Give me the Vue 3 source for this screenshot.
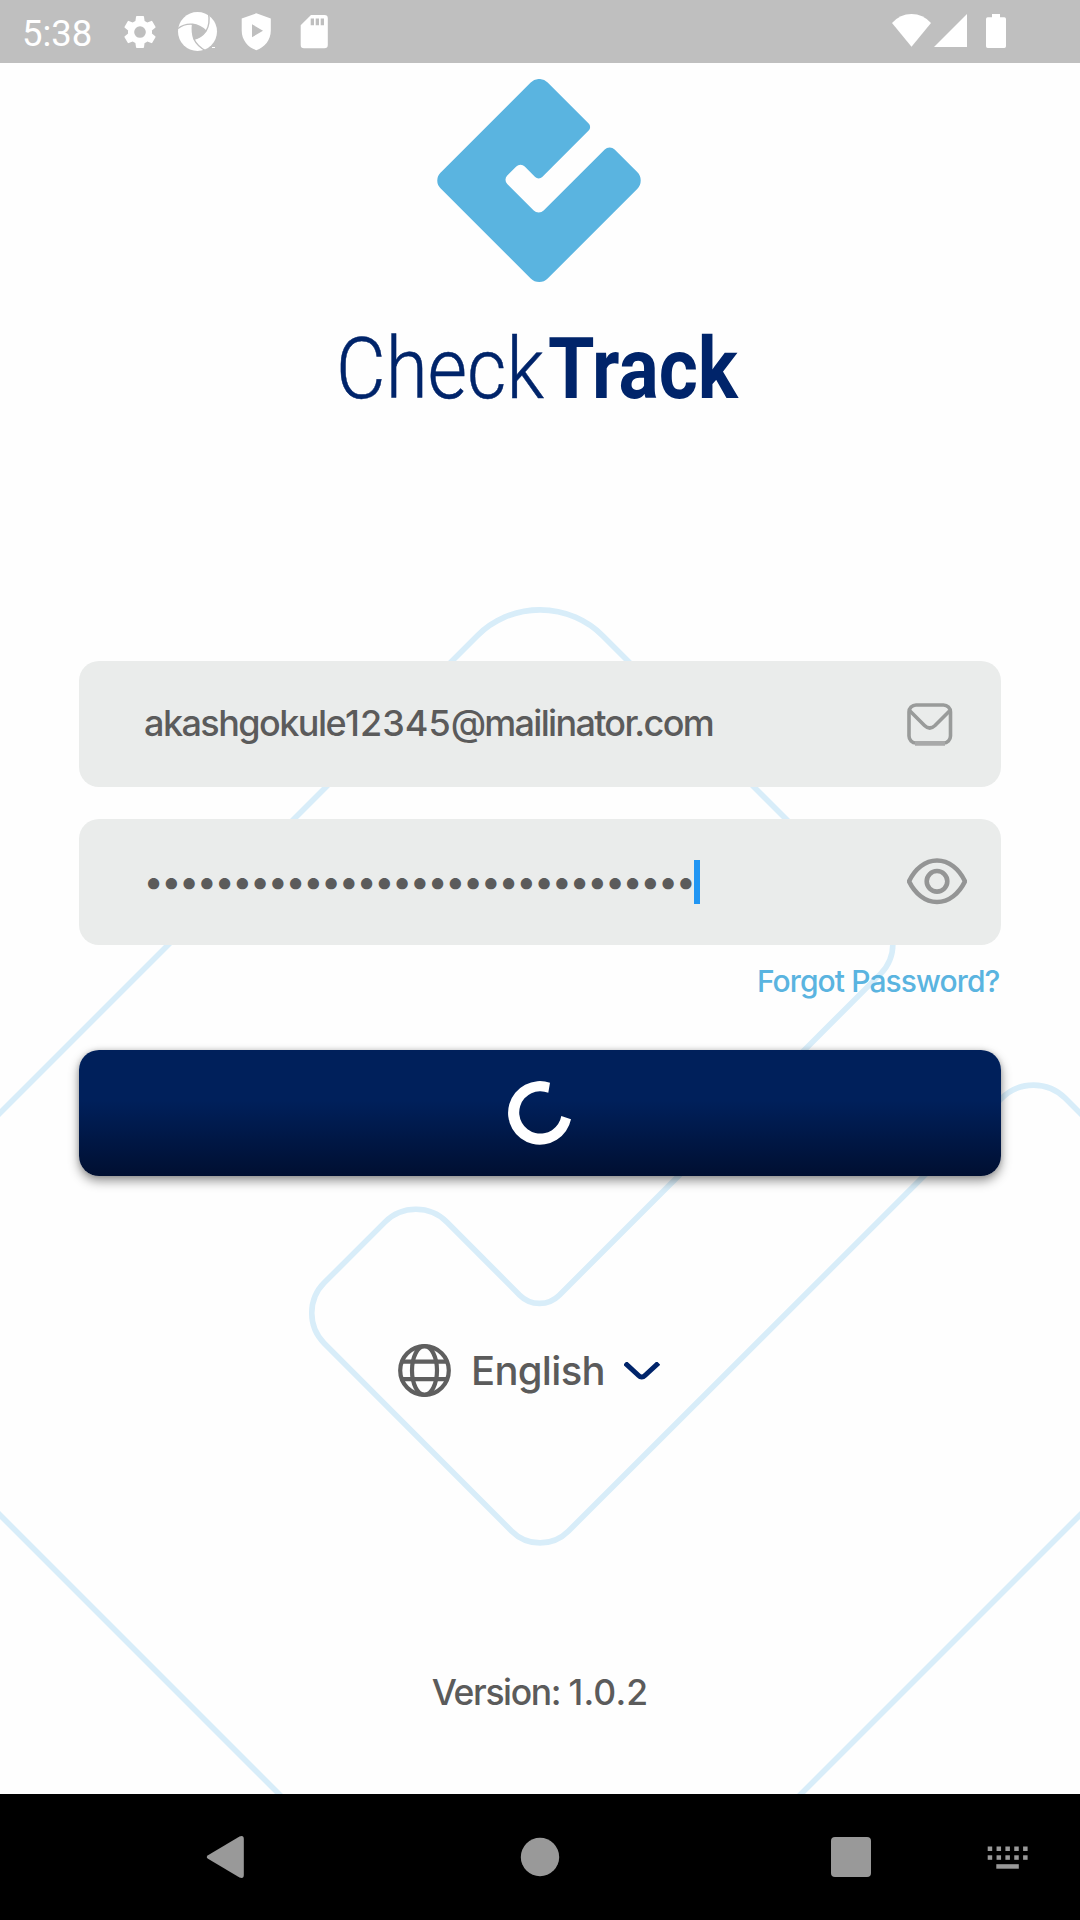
<script setup>
// Builds a path whose right-angled corners are rounded: each point is [x, y, radius].
function rounded(points, closed = true) {
  const n = points.length
  const toward = (a, b, d) => {
    const len = Math.hypot(b[0] - a[0], b[1] - a[1])
    return [a[0] + ((b[0] - a[0]) * d) / len, a[1] + ((b[1] - a[1]) * d) / len]
  }
  let d = ''
  points.forEach((p, i) => {
    if (!closed && (i === 0 || i === n - 1)) {
      d += `${i ? 'L' : 'M'}${p[0]} ${p[1]}`
      return
    }
    const prev = points[(i + n - 1) % n]
    const next = points[(i + 1) % n]
    const s = toward(p, prev, p[2])
    const e = toward(p, next, p[2])
    const cross = (p[0] - prev[0]) * (next[1] - p[1]) - (p[1] - prev[1]) * (next[0] - p[0])
    d += `${d ? 'L' : 'M'}${s[0].toFixed(2)} ${s[1].toFixed(2)}A${p[2]} ${p[2]} 0 0 ${cross > 0 ? 1 : 0} ${e[0].toFixed(2)} ${e[1].toFixed(2)}`
  })
  return closed ? d + 'Z' : d
}

const mark = rounded([
  [539.2, 74, 12], [592.2, 127, 5], [538.7, 180.5, 5], [520.5, 162.3, 6], [503, 179.8, 6],
  [538.7, 215.5, 7], [609.7, 144.5, 7], [645.7, 180.5, 12], [539.2, 287, 12], [432.7, 180.5, 11],
])

const outlineTop = rounded([
  [-20, 1133], [540, 573, 89], [910.7, 943.7, 43], [539.5, 1315, 28], [416, 1191, 44],
  [294, 1313, 43], [540, 1559.5, 40], [1033.5, 1066.5, 45], [1100, 1133],
], false)

const masked = '•'.repeat(31)
const keys = [0, 1, 2, 3, 4]
</script>

<template>
  <div class="screen">
    <header class="status">
      <span class="clock">5:38</span>
      <svg class="left-icons" width="240" height="63" viewBox="95 0 240 63">
        <g transform="translate(120 12) scale(1.667)" fill="#fff">
          <path d="M19.14 12.94c.04-.3.06-.61.06-.94 0-.32-.02-.64-.07-.94l2.03-1.58a.49.49 0 0 0 .12-.61l-1.92-3.32a.49.49 0 0 0-.59-.22l-2.39.96a7 7 0 0 0-1.62-.94l-.36-2.54a.48.48 0 0 0-.48-.41h-3.84a.48.48 0 0 0-.47.41l-.36 2.54c-.59.24-1.13.57-1.62.94l-2.39-.96a.48.48 0 0 0-.59.22L2.74 8.87a.47.47 0 0 0 .12.61l2.03 1.58c-.05.3-.09.63-.09.94s.02.64.07.94l-2.03 1.58a.49.49 0 0 0-.12.61l1.92 3.32c.12.22.37.29.59.22l2.39-.96c.5.38 1.03.7 1.62.94l.36 2.54c.05.24.24.41.48.41h3.84c.24 0 .44-.17.47-.41l.36-2.54a7 7 0 0 0 1.62-.94l2.39.96c.22.08.47 0 .59-.22l1.92-3.32a.47.47 0 0 0-.12-.61zM12 15.5a3.5 3.5 0 1 1 0-7 3.5 3.5 0 0 1 0 7z" />
        </g>
        <circle cx="197.5" cy="31.5" r="19.5" fill="#fff" />
        <g fill="none" stroke="#bfbfbf" stroke-width="1.4">
          <path d="M178 28.5Q184 23.5 192.6 24.2Q200 25 206 31" />
          <path d="M208.5 13Q210.5 24 206 31.2Q201 38 194 39.3" />
          <path d="M206 51Q197.5 46.5 194 39.3Q191.5 32 192.6 24.2" />
        </g>
        <path d="M192.6 24.2Q200 25 206 31.2Q201 38 194 39.3Q191.5 32 192.6 24.2Z" fill="#bfbfbf" />
        <path d="M212 47.5h3" stroke="#fff" stroke-width="1" />
        <path d="M256.3 13.3 270.8 18.5V30.5C270.8 40 264.5 47.5 256.3 50.2C248 47.5 241.7 40 241.7 30.5V18.5ZM252 24.2V37.3L263 30.7Z" fill="#fff" fill-rule="evenodd" />
        <path d="M311 15h13.5a3.3 3.3 0 0 1 3.3 3.3V45a3.3 3.3 0 0 1-3.3 3.3H304a3.3 3.3 0 0 1-3.3-3.3V25.3Z" fill="#fff" />
        <path d="M310.7 18.5h3.3v6.7h-3.3zM315.7 18.5h3.3v6.7h-3.3zM320.7 18.5h3.3v6.7h-3.3z" fill="#bfbfbf" />
      </svg>
      <svg class="right-icons" width="120" height="63" viewBox="888 0 120 63">
        <g fill="#fff">
          <path d="M892 23Q900 14 911.5 14T931 23L911.5 46.7Z" />
          <path d="M967 14V47H934Z" />
          <path d="M992 14h8v3.3h4.3a1.7 1.7 0 0 1 1.7 1.7v27.3a1.7 1.7 0 0 1-1.7 1.7h-16.6a1.7 1.7 0 0 1-1.7-1.7V19a1.7 1.7 0 0 1 1.7-1.7h4.3z" />
        </g>
      </svg>
    </header>

    <main class="page">
      <svg class="backdrop" width="1080" height="1731" viewBox="0 63 1080 1731">
        <g fill="none" stroke="#d8edf9" stroke-width="5.6">
          <path :d="outlineTop" />
          <path d="M-20 1495 300 1815M1100 1495 780 1815" />
        </g>
      </svg>

      <svg class="logo" width="480" height="360" viewBox="300 63 480 360">
        <svg x="339" y="79" width="402" height="240" viewBox="339 79 402 240">
          <path :d="mark" fill="#5ab4e0" />
        </svg>
        <g class="wordmark">
          <text class="light" x="336" y="398" textLength="208" lengthAdjust="spacingAndGlyphs">Check</text>
          <text class="bold" x="548" y="398" textLength="190" lengthAdjust="spacingAndGlyphs">Track</text>
        </g>
      </svg>

      <form class="form" @submit.prevent>
        <label class="field">
          <span class="value email"><span class="user">akashgokule</span><span class="digits">12345</span>@mailinator.com</span>
          <svg class="mail" width="46" height="44" viewBox="0 0 46 44" fill="none" stroke="#999b9a" stroke-width="3.6">
            <rect x="2" y="2" width="41.5" height="38" rx="7" />
            <path d="M3 8 17.5 22.5Q22.7 27.5 28 22.5L42.5 8" />
            <path d="M8 40.5H38" stroke="#a8a9a9" stroke-width="4.5" />
          </svg>
        </label>
        <label class="field">
          <span class="value dots">{{ masked }}</span>
          <i class="caret"></i>
          <svg class="eye" width="60" height="48" viewBox="0 0 60 48" fill="none" stroke="#949595" stroke-width="4.6">
            <path d="M2 23.3C8 11 18 2.5 30 2.5S52 11 58 23.3C52 35.5 42 44 30 44S8 35.5 2 23.3Z" />
            <circle cx="30" cy="23.3" r="10.3" />
          </svg>
        </label>
        <a class="forgot">Forgot Password?</a>
        <button class="submit" type="submit">
          <svg width="64" height="64" viewBox="508 1081 64 64">
            <path d="M550 1082.7A31.8 31.8 0 1 0 571 1119.3L561.3 1116A21.2 21.2 0 1 1 548.3 1092.7Z" fill="#fff" />
          </svg>
        </button>
      </form>

      <div class="language">
        <svg width="53" height="53" viewBox="0 0 53 53" fill="none" stroke="#5f5f5f" stroke-width="4.2">
          <circle cx="26.5" cy="26.5" r="24.3" />
          <ellipse cx="26.5" cy="26.5" rx="12.5" ry="24.3" />
          <path d="M3.5 17.7H49.5M3.5 35.2H49.5" />
        </svg>
        <span class="lang-name">English</span>
        <svg class="chevron" width="36" height="18" viewBox="0 0 36 18" fill="none" stroke="#00246a" stroke-width="5">
          <path d="M1 1 14 13Q17.7 17 21.5 13L34.5 1" />
        </svg>
      </div>

      <p class="version">Version: <span class="number">1.0.2</span></p>
    </main>

    <nav class="nav">
      <svg width="1080" height="126" viewBox="0 1794 1080 126" fill="#999">
        <path d="M208 1855.2 239.5 1836.5Q243.8 1834.8 243.8 1839V1875Q243.8 1879.2 239.5 1877.5L208 1858.7Q205.5 1857 208 1855.2Z" />
        <circle cx="540" cy="1857" r="19.2" />
        <rect x="831" y="1837" width="40" height="40" rx="4" />
        <g v-for="k in keys" :key="k">
          <rect :x="987.7 + k * 8.85" y="1846.5" width="4.5" height="4.5" />
          <rect :x="987.7 + k * 8.85" y="1855.3" width="4.5" height="4.5" />
        </g>
        <rect x="996.3" y="1864.2" width="22.5" height="4.5" />
      </svg>
    </nav>
  </div>
</template>

<style>
body {
  margin: 0;
}
</style>

<style scoped>
.screen {
  width: 1080px;
  height: 1920px;
  display: flex;
  flex-direction: column;
  overflow: hidden;
  background: #fefefe;
  font-family: Inter, "Liberation Sans", sans-serif;
  color: #5b5b5b;
}
.status {
  flex: none;
  height: 63px;
  box-sizing: border-box;
  padding: 0 72px 0 22px;
  display: flex;
  align-items: center;
  background: #bfbfbf;
}
.clock {
  width: 73px;
  padding-top: 5px;
  font: 400 36.5px/42px Roboto, sans-serif;
  color: #fff;
}
.right-icons {
  margin-left: auto;
}
.page {
  flex: none;
  height: 1731px;
  position: relative;
  display: flex;
  flex-direction: column;
  align-items: center;
}
.backdrop {
  position: absolute;
  inset: 0;
}
.logo,
.form,
.language,
.version {
  position: relative;
}
.logo {
  flex: none;
}
.wordmark {
  font-family: Roboto, sans-serif;
  font-size: 86px;
  fill: #00246a;
}
.light {
  font-weight: 300;
  stroke: #00246a;
  stroke-width: 0.5px;
}
.bold {
  font-weight: 700;
}
.form {
  width: 922px;
  margin-top: 238px;
  display: flex;
  flex-direction: column;
}
.field {
  height: 126px;
  box-sizing: border-box;
  margin-bottom: 32px;
  padding: 0 34px 0 65px;
  display: flex;
  align-items: center;
  border-radius: 20px;
  background: #eaeceb;
}
.value {
  font-size: 36px;
  line-height: 44px;
  font-weight: 500;
  white-space: nowrap;
}
.email {
  letter-spacing: -1.7px;
  margin-top: -3px;
}
.user {
  letter-spacing: -1.55px;
}
.digits {
  letter-spacing: 0;
}
.dots {
  width: 550px;
  margin-top: -3px;
  letter-spacing: -1.45px;
}
.caret {
  width: 5.5px;
  height: 44px;
  background: #2196f3;
}
.mail {
  margin: 2px 14px 0 auto;
}
.eye {
  margin: 0 0 0 auto;
}
.forgot {
  align-self: flex-end;
  margin: -14px 1.5px 0 0;
  font-size: 30px;
  line-height: 36px;
  font-weight: 500;
  letter-spacing: -0.9px;
  color: #5ab4e0;
}
.submit {
  height: 126px;
  margin-top: 51px;
  padding: 0;
  border: 0;
  border-radius: 20px;
  display: flex;
  align-items: center;
  justify-content: center;
  background: linear-gradient(#00205b 0%, #00205b 40%, #000f31 100%);
  box-shadow: 0 5px 11px rgba(0, 0, 0, 0.42), 0 0 5px rgba(0, 0, 0, 0.15);
}
.language {
  margin-top: 168px;
  width: 284px;
  height: 53px;
  display: flex;
  align-items: center;
}
.lang-name {
  width: 150px;
  margin-left: 20px;
  font-size: 40px;
  line-height: 48px;
  letter-spacing: -0.7px;
  font-weight: 450;
}
.chevron {
  margin-left: 3px;
}
.version {
  margin: 275px 0 0;
  font-size: 35.5px;
  line-height: 42px;
  font-weight: 500;
  letter-spacing: -1.4px;
  word-spacing: 0.5px;
}
.number {
  letter-spacing: 0.1px;
}
.nav {
  flex: none;
  height: 126px;
  background: #000;
}
.nav svg {
  display: block;
}
</style>
